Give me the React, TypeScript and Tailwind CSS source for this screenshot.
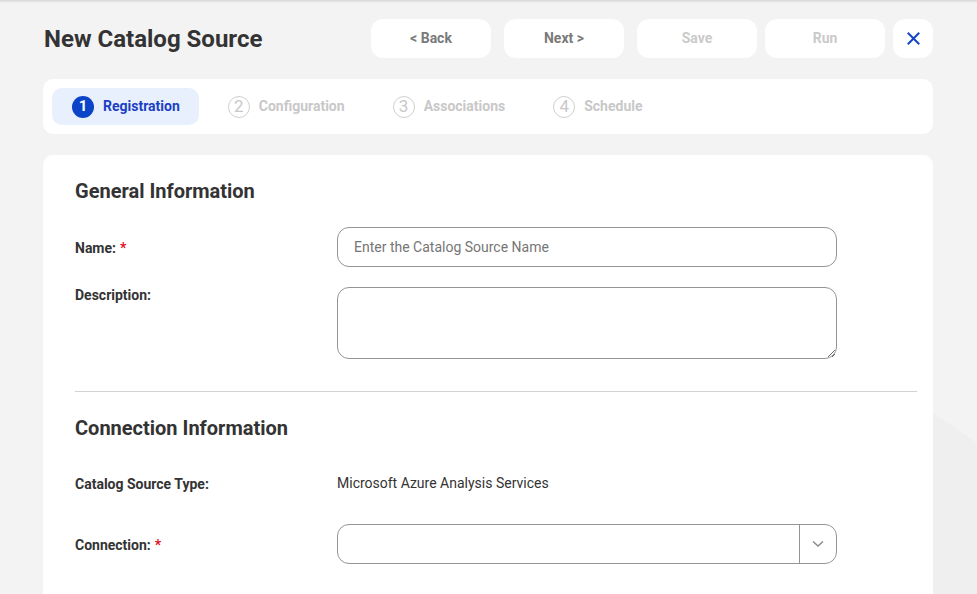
import React from 'react';

const steps = ['Registration', 'Configuration', 'Associations', 'Schedule'];

const Step: React.FC<{ n: number; label: string; active?: boolean }> = ({ n, label, active }) => (
  <div
    className={`flex items-center h-[37px] pl-[20px] pr-[19px] rounded-[10px] gap-[9px] ${
      active ? 'bg-[#e8f0fd]' : ''
    }`}
  >
    {active ? (
      <span className="w-[22px] h-[22px] rounded-full bg-[#0b44c8] text-white text-[15px] font-bold flex items-center justify-center leading-none">
        {n}
      </span>
    ) : (
      <span className="w-[22px] h-[22px] rounded-full border border-[#d0d0d0] text-[#c8c8c8] text-[17px] flex items-center justify-center leading-none">
        {n}
      </span>
    )}
    <span className={`text-[14px] font-bold ${active ? 'text-[#1c3fc2]' : 'text-[#c8c8c8]'}`}>{label}</span>
  </div>
);

const Label: React.FC<{ text: string; required?: boolean; className?: string }> = ({ text, required, className = '' }) => (
  <div className={`w-[262px] shrink-0 text-[14px] font-bold text-[#333] ${className}`}>
    {text}
    {required && <span className="text-[#e0102b] ml-[4px]">*</span>}
  </div>
);

export default function App() {
  return (
    <div
      className="relative min-h-screen bg-[#f3f3f3] overflow-hidden"
      style={{ fontFamily: 'Roboto, "Liberation Sans", sans-serif' }}
    >
      <div className="absolute top-0 left-0 right-0 h-[3px] bg-gradient-to-b from-[#d6d6d6] to-transparent" />
      <svg className="absolute right-0 top-[413px] w-[44px] h-[181px]" viewBox="0 0 44 181" preserveAspectRatio="none">
        <polygon points="0,0 44,30 44,181 0,181" fill="#efefef" />
      </svg>

      <div className="relative px-[43px] pr-[44px] pt-[19px]">
        {/* header */}
        <div className="flex items-center h-[39px]">
          <h1 className="text-[24px] font-bold text-[#333] pl-[1px]">New Catalog Source</h1>
          <div className="ml-auto flex items-center">
            <button className="w-[120px] h-[39px] rounded-[12px] bg-white text-[14px] font-bold text-[#7a7a7a]">
              &lt; Back
            </button>
            <button className="ml-[13px] w-[120px] h-[39px] rounded-[12px] bg-white text-[14px] font-bold text-[#7a7a7a]">
              Next &gt;
            </button>
            <button className="ml-[13px] w-[120px] h-[39px] rounded-[12px] bg-white text-[14px] font-bold text-[#cacaca]">
              Save
            </button>
            <button className="ml-[8px] w-[120px] h-[39px] rounded-[12px] bg-white text-[14px] font-bold text-[#cacaca]">
              Run
            </button>
            <button className="ml-[8px] w-[40px] h-[39px] rounded-[12px] bg-white flex items-center justify-center">
              <svg width="13" height="13" viewBox="0 0 13 13">
                <path d="M1.5 1.5 L11.5 11.5 M11.5 1.5 L1.5 11.5" stroke="#1146c8" strokeWidth="2" strokeLinecap="square" />
              </svg>
            </button>
          </div>
        </div>

        {/* stepper */}
        <div className="mt-[21px] h-[55px] bg-white rounded-[10px] p-[9px] flex items-center gap-[9px]">
          {steps.map((s, i) => (
            <Step key={s} n={i + 1} label={s} active={i === 0} />
          ))}
        </div>

        {/* form card */}
        <div className="mt-[21px] bg-white rounded-t-[10px] pl-[32px] pr-[16px] pt-[24px] pb-[40px]">
          <h2 className="text-[20px] leading-[24px] font-bold text-[#333]">General Information</h2>

          <div className="mt-[24px] flex items-center">
            <Label text="Name:" required className="pt-[3px]" />
            <input
              className="w-[500px] h-[40px] rounded-[12px] border border-[#949494] px-[16px] text-[14px] text-[#333] placeholder:text-[#767676] outline-none"
              placeholder="Enter the Catalog Source Name"
            />
          </div>

          <div className="mt-[20px] flex items-start">
            <Label text="Description:" className="leading-4" />
            <textarea className="w-[500px] h-[72px] rounded-[12px] border border-[#949494] px-[16px] py-[8px] text-[14px] outline-none resize-y" />
          </div>

          <div className="mt-[32px] h-px bg-[#d2d2d2]" />

          <h2 className="mt-[24px] text-[20px] leading-[24px] font-bold text-[#333]">Connection Information</h2>

          <div className="mt-[33px] flex items-center h-[20px]">
            <Label text="Catalog Source Type:" className="pt-[3px]" />
            <div className="text-[14px] text-[#333]">Microsoft Azure Analysis Services</div>
          </div>

          <div className="mt-[31px] flex items-center">
            <Label text="Connection:" required className="pt-[3px]" />
            <div className="w-[500px] h-[40px] rounded-[12px] border border-[#949494] flex">
              <div className="flex-1" />
              <div className="w-[37px] border-l border-[#949494] flex items-center justify-center">
                <svg width="12" height="8" viewBox="0 0 12 8">
                  <path d="M1 1.5 L6 6 L11 1.5" fill="none" stroke="#8a8a8a" strokeWidth="1.5" />
                </svg>
              </div>
            </div>
          </div>
        </div>
      </div>
    </div>
  );
}
